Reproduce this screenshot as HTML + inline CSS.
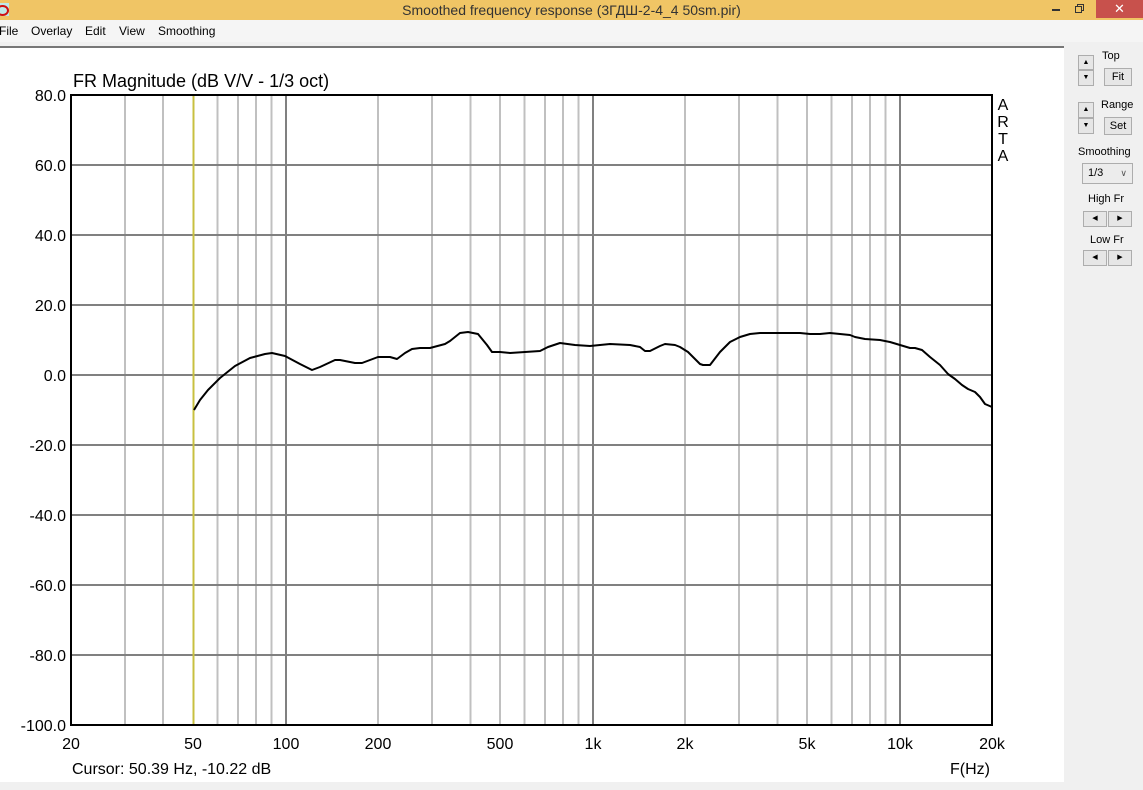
<!DOCTYPE html>
<html><head><meta charset="utf-8"><style>
body{margin:0;width:1143px;height:790px;overflow:hidden;background:#f0f0f0;font-family:"Liberation Sans",Arial,sans-serif;position:relative}
.tb{position:absolute;left:0;top:0;width:1143px;height:20px;background:#f0c565}
.menu{position:absolute;left:0;top:20px;width:1143px;height:22px;background:#f5f5f5;font-size:12px}
.menu span{position:absolute;top:4px}
.btn{position:absolute;background:#e6e6e6;border:1px solid #adadad;box-sizing:border-box;font-size:11px;text-align:center;color:#000}
.lbl{position:absolute;font-size:11px;color:#000}
</style></head><body>
<div class="tb">
<div style="position:absolute;left:0;top:3px;width:9px;height:13px;background:#bfe8e8"></div>
<div style="position:absolute;left:-4px;top:5px;width:9px;height:7px;border:2px solid #d01010;border-radius:50%"></div>
<div style="position:absolute;left:0;width:1143px;top:2px;text-align:center;font-size:14px;color:#333">Smoothed frequency response (3ГДШ-2-4_4 50sm.pir)</div>
<div style="position:absolute;left:1052px;top:9px;width:8px;height:2px;background:#333"></div>
<div style="position:absolute;left:1077px;top:4px;width:7px;height:7px;border:1px solid #333;box-sizing:border-box"></div>
<div style="position:absolute;left:1075px;top:6px;width:7px;height:7px;border:1px solid #333;background:#f0c565;box-sizing:border-box"></div>
<div style="position:absolute;left:1096px;top:0;width:47px;height:18px;background:#c8514c;color:#fff;text-align:center;font-size:13px;line-height:17px">✕</div>
</div>
<div class="menu"><span style="left:-1px">File</span><span style="left:31px">Overlay</span><span style="left:85px">Edit</span><span style="left:119px">View</span><span style="left:158px">Smoothing</span></div>
<div style="position:absolute;left:0;top:46px;width:1064px;height:736px;background:#fff;border-top:2px solid #777;box-sizing:border-box"></div>
<svg style="position:absolute;left:0;top:0" width="1143" height="790" font-family="Liberation Sans, Arial, sans-serif">
<g stroke="#c0c0c0" stroke-width="2">
<line x1="125" y1="95" x2="125" y2="725"/><line x1="163" y1="95" x2="163" y2="725"/><line x1="217.5" y1="95" x2="217.5" y2="725"/><line x1="238" y1="95" x2="238" y2="725"/><line x1="256" y1="95" x2="256" y2="725"/><line x1="271.5" y1="95" x2="271.5" y2="725"/>
<line x1="378" y1="95" x2="378" y2="725"/><line x1="432" y1="95" x2="432" y2="725"/><line x1="470.5" y1="95" x2="470.5" y2="725"/><line x1="500" y1="95" x2="500" y2="725"/><line x1="524.5" y1="95" x2="524.5" y2="725"/><line x1="545" y1="95" x2="545" y2="725"/><line x1="563" y1="95" x2="563" y2="725"/><line x1="578.5" y1="95" x2="578.5" y2="725"/>
<line x1="685" y1="95" x2="685" y2="725"/><line x1="739" y1="95" x2="739" y2="725"/><line x1="777.5" y1="95" x2="777.5" y2="725"/><line x1="807" y1="95" x2="807" y2="725"/><line x1="831.5" y1="95" x2="831.5" y2="725"/><line x1="852" y1="95" x2="852" y2="725"/><line x1="870" y1="95" x2="870" y2="725"/><line x1="885.5" y1="95" x2="885.5" y2="725"/>
</g>
<g stroke="#808080" stroke-width="2">
<line x1="286" y1="95" x2="286" y2="725"/><line x1="593" y1="95" x2="593" y2="725"/><line x1="900" y1="95" x2="900" y2="725"/>
<line x1="71" y1="165" x2="992" y2="165"/><line x1="71" y1="235" x2="992" y2="235"/><line x1="71" y1="305" x2="992" y2="305"/><line x1="71" y1="375" x2="992" y2="375"/><line x1="71" y1="445" x2="992" y2="445"/><line x1="71" y1="515" x2="992" y2="515"/><line x1="71" y1="585" x2="992" y2="585"/><line x1="71" y1="655" x2="992" y2="655"/>
</g>
<line x1="193.5" y1="95" x2="193.5" y2="725" stroke="#c8c040" stroke-width="2"/>
<rect x="71" y="95" width="921" height="630" fill="none" stroke="#000" stroke-width="2"/>
<polyline fill="none" stroke="#000" stroke-width="2" stroke-linejoin="round" points="194,410 200,400 208,390 220,378 235,366 250,358 265,354 272,353 285,356 300,364 310,369 312,370 320,367 335,360 340,360 355,363 362,363 378,357 390,357 397,359 405,353 412,349 420,348 430,348 445,344 450,341 460,333 468,332 478,334 487,345 492,352 500,352 510,353 525,352 540,351 548,347 560,343 575,345 590,346 610,344 630,345 640,347 645,351 650,351 660,346 665,344 675,345 680,347 688,352 695,359 700,364 703,365 710,365 720,352 730,342 740,337 750,334 760,333 800,333 810,334 820,334 830,333 840,334 850,335 855,337 865,339 880,340 890,342 900,345 910,348 915,348 922,350 930,357 940,365 948,374 955,379 962,385 968,389 975,392 980,397 985,404 992,407"/>
<text x="73" y="87" font-size="18">FR Magnitude (dB V/V - 1/3 oct)</text>
<g font-size="16" text-anchor="end">
<text x="66" y="101">80.0</text><text x="66" y="171">60.0</text><text x="66" y="241">40.0</text><text x="66" y="311">20.0</text><text x="66" y="381">0.0</text><text x="66" y="451">-20.0</text><text x="66" y="521">-40.0</text><text x="66" y="591">-60.0</text><text x="66" y="661">-80.0</text><text x="66" y="731">-100.0</text>
</g>
<g font-size="16" text-anchor="middle">
<text x="71" y="749">20</text><text x="193" y="749">50</text><text x="286" y="749">100</text><text x="378" y="749">200</text><text x="500" y="749">500</text><text x="593" y="749">1k</text><text x="685" y="749">2k</text><text x="807" y="749">5k</text><text x="900" y="749">10k</text><text x="992" y="749">20k</text>
<text x="1003" y="110">A</text><text x="1003" y="127">R</text><text x="1003" y="144">T</text><text x="1003" y="161">A</text>
</g>
<text x="72" y="774" font-size="16">Cursor: 50.39 Hz, -10.22 dB</text>
<text x="950" y="774" font-size="16">F(Hz)</text>
</svg>
<div class="btn" style="left:1078px;top:55px;width:16px;height:15px;line-height:13px;font-size:7px">▲</div>
<div class="btn" style="left:1078px;top:70px;width:16px;height:16px;line-height:14px;font-size:7px">▼</div>
<div class="lbl" style="left:1102px;top:50px">Top</div>
<div class="btn" style="left:1104px;top:68px;width:28px;height:18px;line-height:16px">Fit</div>
<div class="btn" style="left:1078px;top:102px;width:16px;height:16px;line-height:14px;font-size:7px">▲</div>
<div class="btn" style="left:1078px;top:118px;width:16px;height:16px;line-height:14px;font-size:7px">▼</div>
<div class="lbl" style="left:1101px;top:99px">Range</div>
<div class="btn" style="left:1104px;top:117px;width:28px;height:18px;line-height:16px">Set</div>
<div class="lbl" style="left:1078px;top:146px">Smoothing</div>
<div class="btn" style="left:1082px;top:163px;width:51px;height:21px;line-height:19px;text-align:left;padding-left:5px;background:#ececec">1/3<span style="position:absolute;right:5px;top:0;font-size:9px;color:#555">∨</span></div>
<div class="lbl" style="left:1088px;top:193px">High Fr</div>
<div class="btn" style="left:1083px;top:211px;width:24px;height:16px;line-height:14px;font-size:7px">◀</div>
<div class="btn" style="left:1108px;top:211px;width:24px;height:16px;line-height:14px;font-size:7px">▶</div>
<div class="lbl" style="left:1090px;top:234px">Low Fr</div>
<div class="btn" style="left:1083px;top:250px;width:24px;height:16px;line-height:14px;font-size:7px">◀</div>
<div class="btn" style="left:1108px;top:250px;width:24px;height:16px;line-height:14px;font-size:7px">▶</div>
</body></html>
